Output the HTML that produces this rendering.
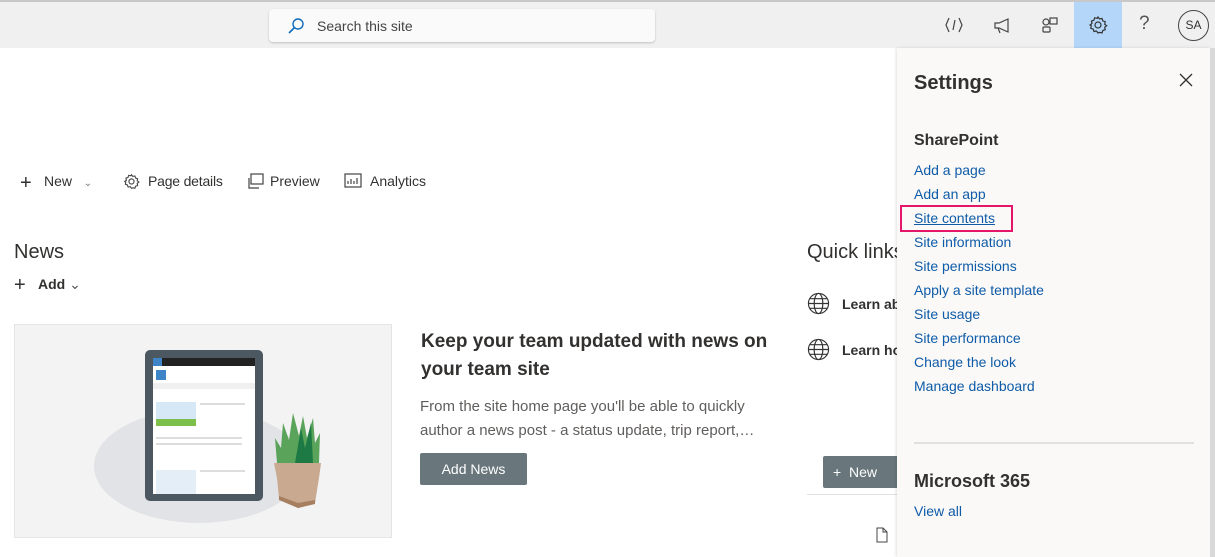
<!DOCTYPE html>
<html><head><meta charset="utf-8"><style>
*{margin:0;padding:0;box-sizing:border-box}
body{width:1215px;height:557px;overflow:hidden;background:#fff;font-family:"Liberation Sans",sans-serif;color:#323130;position:relative}
.abs{position:absolute}
.top{left:0;top:0;width:1215px;height:48px;background:#f0f0f0;border-top:2px solid #c8c8c8}
.search{left:269px;top:9px;width:386px;height:33px;background:#fafafa;border-radius:4px;box-shadow:0 1px 2px rgba(0,0,0,.2);font-size:14px;color:#444}
.link{color:#0f5ba8;font-size:14px;position:absolute;left:914px}
.panel{left:897px;top:48px;width:313px;height:509px;background:#faf9f8;box-shadow:-1px 0 3px rgba(0,0,0,.12)}
.t{font-size:14px;color:#323130}
</style></head><body>
<div class="abs top"></div>
<div class="abs search"><svg class="abs" style="left:18px;top:8px" width="18" height="18" viewBox="0 0 18 18"><circle cx="11" cy="7" r="5" fill="none" stroke="#0f6cbd" stroke-width="1.4"/><path d="M7.5 10.5L2 16" stroke="#0f6cbd" stroke-width="1.6"/></svg><span class="abs" style="left:48px;top:9px">Search this site</span></div>
<svg class="abs" style="left:944px;top:15px" width="20" height="20" viewBox="0 0 20 20" fill="none" stroke="#444" stroke-width="1.2"><path d="M5 3L2 10l3 7M15 3l3 7-3 7M11 5L9 15"/></svg>
<svg class="abs" style="left:992px;top:15px" width="20" height="20" viewBox="0 0 20 20" fill="none" stroke="#444" stroke-width="1.2"><path d="M3 8h4l9-4v13l-9-4H3zM6 13l2 5"/></svg>
<svg class="abs" style="left:1040px;top:15px" width="20" height="20" viewBox="0 0 20 20" fill="none" stroke="#444" stroke-width="1.2"><circle cx="6" cy="7" r="3"/><rect x="10" y="3" width="7" height="6"/><rect x="3" y="12" width="7" height="5" rx="1"/></svg>
<div class="abs" style="left:1074px;top:2px;width:48px;height:46px;background:#b3d6f9"></div>
<svg class="abs" style="left:1088px;top:15px" width="20" height="20" viewBox="0 0 20 20" fill="none" stroke="#333" stroke-width="1.2"><circle cx="10" cy="10" r="3"/><path d="M10 2l1.5 2 2.5-.5.8 2.4 2.4.8-.5 2.5 2 1.5-2 1.5.5 2.5-2.4.8-.8 2.4-2.5-.5L10 18l-1.5-2-2.5.5-.8-2.4-2.4-.8.5-2.5L2 10l2-1.5L3.5 6l2.4-.8.8-2.4 2.5.5z"/></svg>
<div class="abs" style="left:1139px;top:13px;font-size:19px;color:#555">?</div>
<div class="abs" style="left:1178px;top:10px;width:31px;height:31px;border:1px solid #444;border-radius:50%;font-size:12px;text-align:center;line-height:29px">SA</div>
<div class="abs t" style="left:20px;top:172px;font-size:20px;font-weight:300">+</div>
<div class="abs t" style="left:44px;top:173px">New &nbsp;&nbsp;<span style="font-size:10px;color:#777">&#8964;</span></div>
<svg class="abs" style="left:123px;top:173px" width="17" height="17" viewBox="0 0 20 20" fill="none" stroke="#444" stroke-width="1.3"><circle cx="10" cy="10" r="3"/><path d="M10 2l1.5 2 2.5-.5.8 2.4 2.4.8-.5 2.5 2 1.5-2 1.5.5 2.5-2.4.8-.8 2.4-2.5-.5L10 18l-1.5-2-2.5.5-.8-2.4-2.4-.8.5-2.5L2 10l2-1.5L3.5 6l2.4-.8.8-2.4 2.5.5z"/></svg>
<div class="abs t" style="left:148px;top:173px;letter-spacing:-0.2px">Page details</div>
<svg class="abs" style="left:247px;top:172px" width="18" height="18" viewBox="0 0 18 18" fill="none" stroke="#444" stroke-width="1.2"><rect x="4" y="2" width="12" height="10"/><path d="M2 6v10h10"/></svg>
<div class="abs t" style="left:270px;top:173px">Preview</div>
<svg class="abs" style="left:344px;top:173px" width="18" height="15" viewBox="0 0 18 15" fill="none" stroke="#444" stroke-width="1.2"><rect x="1" y="1" width="16" height="13"/><path d="M4 11V8M7 11V6M10 11V8M13 11V5"/></svg>
<div class="abs t" style="left:370px;top:173px">Analytics</div>
<div class="abs" style="left:14px;top:241px;font-size:20px">News</div>
<div class="abs" style="left:14px;top:274px;font-size:20px;font-weight:300">+</div>
<div class="abs t" style="left:38px;top:276px;font-weight:600">Add <span style="font-weight:normal;color:#555">&#8964;</span></div>
<div class="abs" style="left:14px;top:324px;width:378px;height:214px;background:#f3f3f3;border:1px solid #e5e5e5;overflow:hidden">
 <div class="abs" style="left:79px;top:84px;width:210px;height:114px;border-radius:50%;background:#e2e3e6"></div>
 <div class="abs" style="left:130px;top:25px;width:118px;height:151px;background:#4b5861;border-radius:5px"></div>
 <div class="abs" style="left:138px;top:33px;width:102px;height:136px;background:#fff"></div>
 <div class="abs" style="left:138px;top:33px;width:102px;height:8px;background:#222"></div>
 <div class="abs" style="left:138px;top:33px;width:9px;height:8px;background:#3d85c6"></div>
 <div class="abs" style="left:141px;top:45px;width:10px;height:10px;background:#3d85c6"></div>
 <div class="abs" style="left:138px;top:58px;width:102px;height:6px;background:#f0f0f0"></div>
 <div class="abs" style="left:141px;top:77px;width:40px;height:24px;background:#d6e8f5"></div>
 <div class="abs" style="left:141px;top:94px;width:40px;height:7px;background:#7cbf4a"></div>
 <div class="abs" style="left:185px;top:78px;width:45px;height:2px;background:#ddd"></div>
 <div class="abs" style="left:141px;top:112px;width:86px;height:2px;background:#ddd"></div>
 <div class="abs" style="left:141px;top:118px;width:86px;height:2px;background:#ddd"></div>
 <div class="abs" style="left:141px;top:145px;width:40px;height:24px;background:#e3eef7"></div>
 <div class="abs" style="left:185px;top:145px;width:45px;height:2px;background:#ddd"></div>
 <svg class="abs" style="left:258px;top:83px" width="50" height="100" viewBox="0 0 50 100"><path d="M4 55 L2 30 L8 40 L10 15 L16 32 L20 5 L26 28 L30 8 L34 30 L40 10 L42 35 L47 25 L46 55Z" fill="#5aa35a"/><path d="M22 55 L28 20 L32 40 L38 15 L40 55Z" fill="#1e7a45"/><path d="M1 55 H48 L46 70 L42 95 L25 100 L6 90 L4 70Z" fill="#c9a98f"/><path d="M6 88 L25 95 L42 92 L42 96 L25 100 L6 92Z" fill="#a57f60"/></svg>
</div>
<div class="abs" style="left:421px;top:328px;font-size:19px;line-height:28px;width:360px;font-weight:600">Keep your team updated with news on your team site</div>
<div class="abs" style="left:420px;top:395px;font-size:15px;line-height:24px;color:#605e5c;width:360px">From the site home page you'll be able to quickly author a news post - a status update, trip report,…</div>
<div class="abs" style="left:420px;top:453px;width:107px;height:32px;background:#69777c;border-radius:2px;color:#fff;font-size:14px;text-align:center;line-height:32px">Add News</div>
<div class="abs" style="left:807px;top:241px;font-size:20px">Quick links</div>
<svg class="abs" style="left:807px;top:292px" width="23" height="23" viewBox="0 0 24 24" fill="none" stroke="#333" stroke-width="1.2"><circle cx="12" cy="12" r="10.5"/><ellipse cx="12" cy="12" rx="4.5" ry="10.5"/><path d="M1.5 12h21M3 7h18M3 17h18"/></svg>
<div class="abs t" style="left:842px;top:296px;font-weight:600">Learn about</div>
<svg class="abs" style="left:807px;top:338px" width="23" height="23" viewBox="0 0 24 24" fill="none" stroke="#333" stroke-width="1.2"><circle cx="12" cy="12" r="10.5"/><ellipse cx="12" cy="12" rx="4.5" ry="10.5"/><path d="M1.5 12h21M3 7h18M3 17h18"/></svg>
<div class="abs t" style="left:842px;top:342px;font-weight:600">Learn how</div>
<div class="abs" style="left:823px;top:456px;width:90px;height:32px;background:#69777c;border-radius:2px;color:#fff;font-size:14px;line-height:32px;padding-left:10px">+ &nbsp;New</div>
<div class="abs" style="left:807px;top:494px;width:100px;height:1px;background:#e1e1e1"></div>
<svg class="abs" style="left:876px;top:527px" width="12" height="16" viewBox="0 0 12 16" fill="none" stroke="#444"><path d="M1 1h6l4 4v10H1zM7 1v4h4"/></svg>
<div class="abs panel"></div>
<div class="abs" style="left:1210px;top:48px;width:5px;height:509px;background:#d9d9d9"></div>
<div class="abs" style="left:914px;top:72px;font-size:20px;font-weight:600;color:#323130">Settings</div>
<svg class="abs" style="left:1179px;top:73px" width="14" height="14" viewBox="0 0 14 14" stroke="#333" stroke-width="1.3"><path d="M1 1l12 12M13 1L1 13"/></svg>
<div class="abs" style="left:914px;top:132px;font-size:16px;font-weight:bold">SharePoint</div>
<div class="link" style="top:162px">Add a page</div>
<div class="link" style="top:186px">Add an app</div>
<div class="abs" style="left:900px;top:205px;width:113px;height:27px;border:2px solid #e3166a"></div>
<div class="link" style="top:210px;text-decoration:underline">Site contents</div>
<div class="link" style="top:234px">Site information</div>
<div class="link" style="top:258px">Site permissions</div>
<div class="link" style="top:282px">Apply a site template</div>
<div class="link" style="top:306px">Site usage</div>
<div class="link" style="top:330px">Site performance</div>
<div class="link" style="top:354px">Change the look</div>
<div class="link" style="top:378px">Manage dashboard</div>
<div class="abs" style="left:914px;top:442px;width:280px;height:2px;background:#e1e1e1"></div>
<div class="abs" style="left:914px;top:471px;font-size:18px;font-weight:600">Microsoft 365</div>
<div class="link" style="top:503px">View all</div>
</body></html>
